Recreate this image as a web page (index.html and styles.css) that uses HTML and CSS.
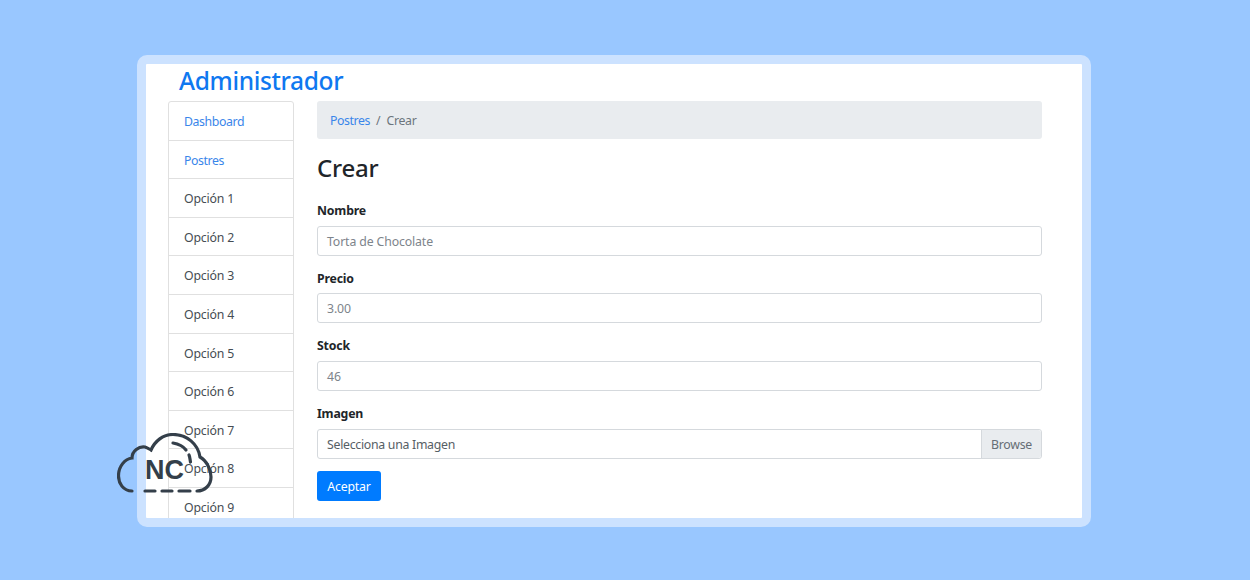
FILE: index.html
```html
<!DOCTYPE html>
<html lang="es">
<head>
<meta charset="utf-8">
<title>Administrador</title>
<link rel="stylesheet" href="styles.css">
</head>
<body>
<div class="frame">
  <div class="page">
    <h1 class="brand">Administrador</h1>
    <div class="layout">
      <ul class="menu">
        <li class="item link">Dashboard</li>
        <li class="item link">Postres</li>
        <li class="item">Opción 1</li>
        <li class="item">Opción 2</li>
        <li class="item">Opción 3</li>
        <li class="item">Opción 4</li>
        <li class="item">Opción 5</li>
        <li class="item">Opción 6</li>
        <li class="item">Opción 7</li>
        <li class="item">Opción 8</li>
        <li class="item">Opción 9</li>
      </ul>
      <main class="content">
        <nav class="crumbs"><a class="crumb-link">Postres</a><span class="crumb-sep">/</span><span class="crumb-now">Crear</span></nav>
        <h2 class="title">Crear</h2>
        <form class="form">
          <div class="field"><label class="label">Nombre</label><div class="input">Torta de Chocolate</div></div>
          <div class="field"><label class="label">Precio</label><div class="input">3.00</div></div>
          <div class="field"><label class="label">Stock</label><div class="input">46</div></div>
          <div class="field"><label class="label">Imagen</label>
            <div class="file"><span class="file-name">Selecciona una Imagen</span><span class="file-btn">Browse</span></div>
          </div>
          <div class="submit">Aceptar</div>
        </form>
      </main>
    </div>
  </div>
  <div class="logo">
    <svg width="96" height="62" viewBox="0 0 96 62" fill="none" stroke="#343f4a" stroke-width="3.200" stroke-linecap="round">
      <path d="M15 58C6 58 1.500 50 1.500 43C1.500 33 8 26 15 25C15 18 22 13 28 14C31 15 32 16 34 17C38 8 46 1.500 56 1.500C70 1.500 81 11 83 24C90 28 94 37 94 44C94 52 88 58 80 58"/>
      <path d="M28 58H38M45 58H55M62 58H73"/>
      <path d="M56 10C62 11 66 13 69 17M72 22C73 24 73 27 73.500 29"/>
    </svg>
    <span class="logo-text">NC</span>
  </div>
</div>
</body>
</html>
```
FILE: styles.css
```css
* { box-sizing: border-box; }
html, body { margin: 0; padding: 0; }
body {
  background: #99c7ff;
  font-family: "Noto Sans", "Open Sans", sans-serif;
  font-size: 12.3px;
  letter-spacing: -0.18px;
  line-height: 19.2px;
  color: #212529;
  height: 580px;
  overflow: hidden;
}
.frame {
  position: relative;
  width: 954px;
  height: 472px;
  margin: 55px 0 0 137px;
  border: 9px solid #cce2ff;
  border-radius: 10px;
  background: #fff;
}
.page { height: 454px; overflow: hidden; }
.brand {
  margin: 0 0 0 33px;
  height: 37px;
  font-size: 24.5px;
  letter-spacing: -0.35px;
  line-height: 34px;
  font-weight: 500;
  color: #0f78f0;
}
.layout { display: flex; padding-left: 22px; }
.menu {
  list-style: none;
  margin: 0;
  padding: 0;
  width: 126px;
  flex: none;
  border: 1px solid #e0e0e0;
  border-radius: 3px;
}
.item {
  height: 38.600px;
  padding: 9.950px 15px 0;
  border-bottom: 1px solid #e0e0e0;
  color: #454c53;
}
.link { color: #3a86ea; letter-spacing: -0.4px; }
.content { width: 725px; margin-left: 23px; }
.crumbs {
  display: flex;
  height: 38px;
  align-items: center;
  padding: 2px 13px 0;
  background: #e9ecef;
  border-radius: 3px;
}
.crumb-link { color: #3a86ea; letter-spacing: -0.4px; }
.crumb-sep { margin: 0 6px; color: #6c757d; }
.crumb-now { color: #6c757d; letter-spacing: -0.3px; }
.title {
  margin: 13px 0 0;
  height: 48.900px;
  font-size: 24px;
  letter-spacing: -0.25px;
  line-height: 32px;
  font-weight: 500;
  color: #212529;
}
.form { display: flex; flex-direction: column; }
.field { height: 67.700px; }
.label {
  display: block;
  height: 24.800px;
  font-weight: 700;
  color: #212529;
}
.input, .file {
  height: 30px;
  border: 1px solid #d5d9dd;
  border-radius: 3px;
  padding: 0 9px;
  line-height: 30.600px;
  color: #7d848b;
  letter-spacing: -0.13px;
}
.file {
  display: flex;
  justify-content: space-between;
  padding: 0 0 0 9px;
  color: #565e65;
  line-height: 30px;
}
.file-name { letter-spacing: -0.28px; }
.file-btn {
  width: 60px;
  text-align: center;
  background: #e9ecef;
  border-left: 1px solid #d5d9dd;
  border-radius: 0 3px 3px 0;
  color: #666e75;
  letter-spacing: -0.28px;
}
.submit {
  width: 64px;
  height: 30px;
  margin-top: -1px;
  background: #007bff;
  color: #fff;
  border-radius: 3px;
  text-align: center;
  line-height: 31px;
}
.logo {
  position: absolute;
  left: -29px;
  top: 369px;
  width: 96px;
  height: 62px;
}
.logo svg { display: block; }
.logo-text {
  position: absolute;
  left: 28px;
  top: 21px;
  font-family: "Liberation Sans", sans-serif;
  font-size: 27px;
  letter-spacing: 0;
  line-height: 32px;
  font-weight: 700;
  color: #343f4a;
}
```
